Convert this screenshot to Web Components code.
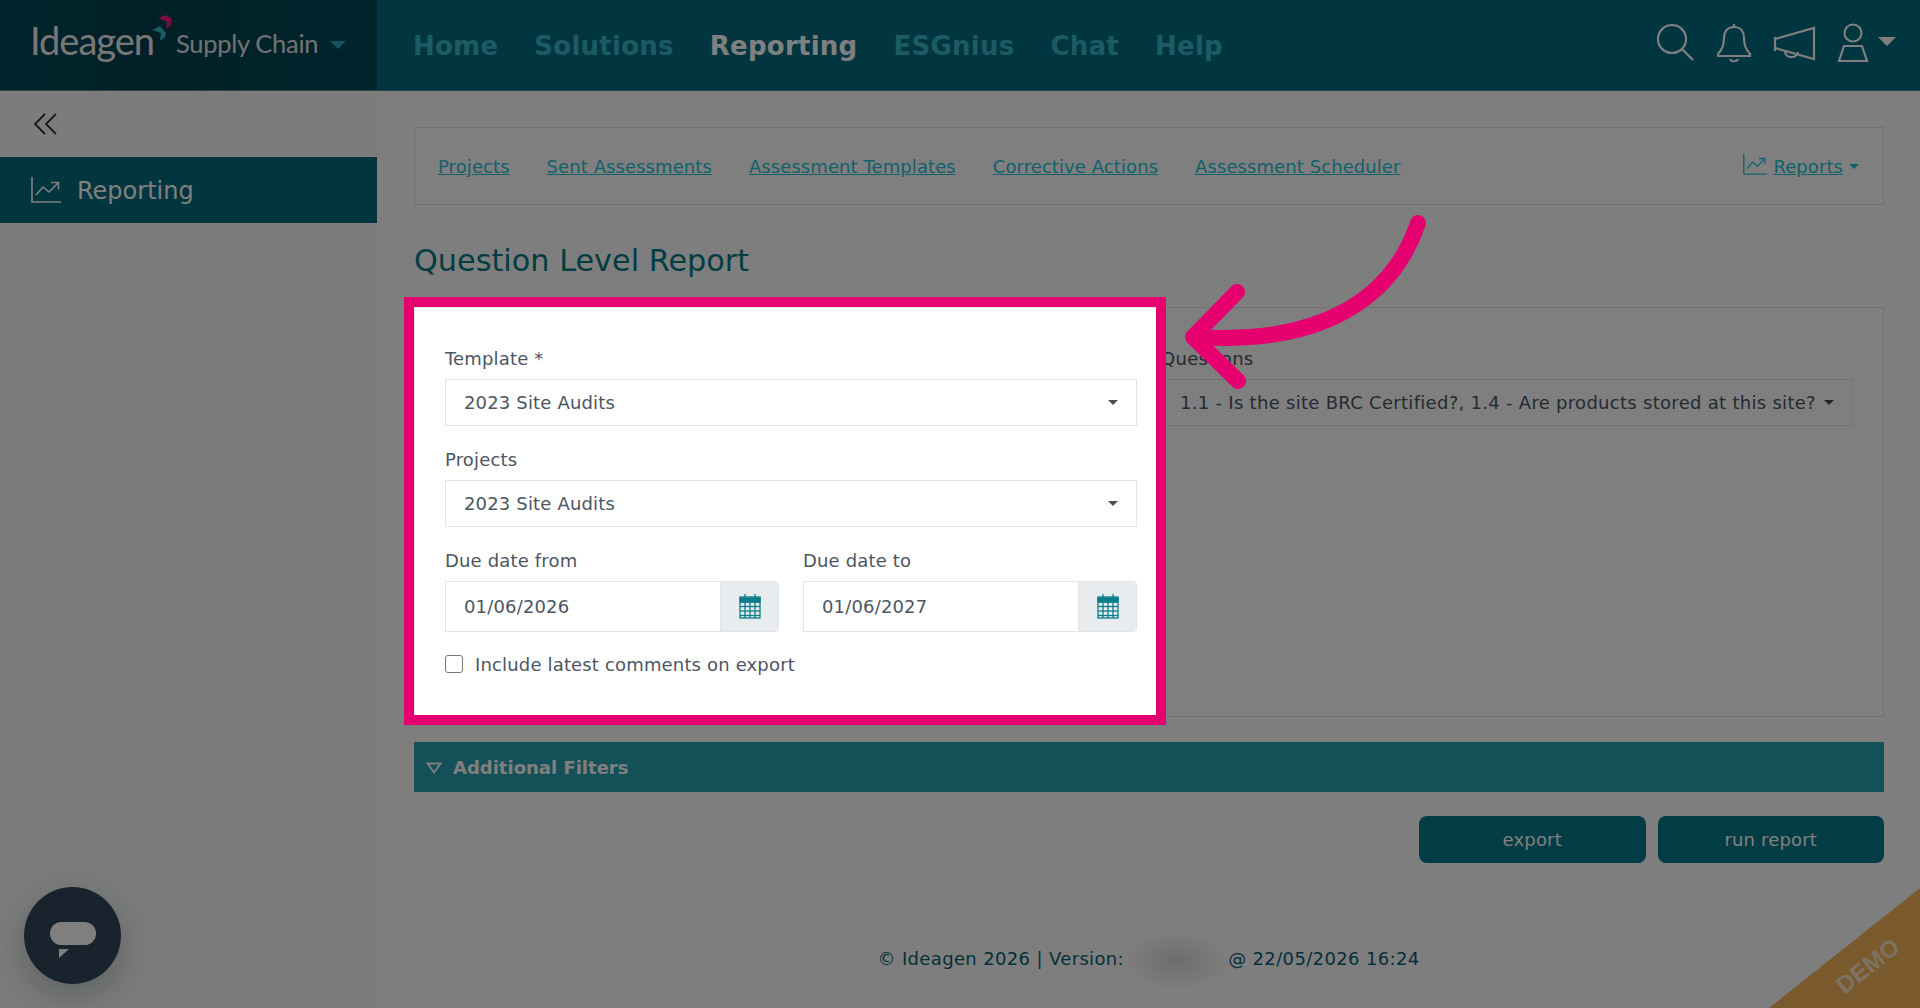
<!DOCTYPE html>
<html>
<head>
<meta charset="utf-8">
<title>Question Level Report</title>
<style>
  html, body { margin: 0; height: 100%; }
  body { font-family: "DejaVu Sans", sans-serif; font-size: 18px; letter-spacing: .16px; background: #fdfdfd; overflow: hidden; }
</style>
</head>
<body>

<sc-header></sc-header>
<div style="display:flex;height:917px">
  <sc-sidebar></sc-sidebar>
  <sc-main>
    <sc-subnav></sc-subnav>
    <sc-report></sc-report>
  </sc-main>
</div>
<sc-chat></sc-chat>
<sc-ribbon></sc-ribbon>
<sc-spotlight></sc-spotlight>

<script>
const chartIcon = `<svg viewBox="0 0 30 26" fill="none" stroke="currentColor" stroke-width="1.6"><path d="M1 0v25h29"/><path d="M5 18l7-8 6 5 9-9M20 5.500h7.500v7"/></svg>`;

class ScHeader extends HTMLElement {
  constructor() {
    super();
    this.attachShadow({mode: 'open'}).innerHTML = `
    <style>
      :host { display: flex; height: 91px; background: #036b7e; box-sizing: border-box; border-bottom: 1px solid #5a8b93; }
      .brand { width: 377px; flex: none; display: flex; align-items: flex-start; background: linear-gradient(90deg, #014b5a, #013f4d 40%, #014b5a); color: #fff; position: relative; }
      .ideagen { position: absolute; left: 30px; top: 17px; font: 400 38px "Lato", sans-serif; letter-spacing: -1px; color: #eee; }
      .mark { position: absolute; left: 150px; top: 14px; width: 22px; height: 28px; }
      .product { position: absolute; left: 176px; top: 28px; font: 400 25.500px "Lato", sans-serif; letter-spacing: -.3px; color: #e4e4e4; }
      .caret { position: absolute; left: 330px; top: 41px; width: 0; height: 0; border: 8px solid transparent; border-top: 8px solid #2aa9bd; border-bottom: 0; }
      nav { display: flex; gap: 36px; padding: 28px 0 0 36px; font-weight: bold; font-size: 26px; line-height: 36px; letter-spacing: .25px; color: #36b8c8; flex: 1; }
      nav .on { color: #fff; }
      .icons { display: flex; align-items: flex-start; color: #fff; padding: 0 24px 0 0; position: relative; width: 256px; }
      .icons svg { position: absolute; fill: none; stroke: currentColor; stroke-width: 2.200; }
      .ucaret { position: absolute; left: 238px; top: 37px; width: 0; height: 0; border: 9px solid transparent; border-top: 9px solid #fff; border-bottom: 0; }
    </style>
    <div class="brand">
      <span class="ideagen">Ideagen</span>
      <svg class="mark" viewBox="0 0 22 28"><path d="M8 4l8-3 6 4-1 6-5 4 1-7z" fill="#f0207f"/><path d="M2 16l8-4 6 7-1 4-5 4 1-8z" fill="#36b8c8"/></svg>
      <span class="product">Supply Chain</span>
      <span class="caret"></span>
    </div>
    <nav><span>Home</span><span>Solutions</span><span class="on">Reporting</span><span>ESGnius</span><span>Chat</span><span>Help</span></nav>
    <div class="icons">
      <svg style="left:16px;top:22px" width="42" height="40" viewBox="0 0 42 40"><circle cx="16" cy="17" r="14"/><path d="M26 27l11 11"/></svg>
      <svg style="left:76px;top:22px" width="36" height="42" viewBox="0 0 36 42"><path d="M18 2v3M18 5c-7 0-10 5-10 11 0 8-2 12-6 16v2h32v-2c-4-4-6-8-6-16 0-6-3-11-10-11zM14 37c1 3 7 3 8 0"/></svg>
      <svg style="left:133px;top:25px" width="44" height="38" viewBox="0 0 44 38"><path d="M2 12v14M2 14L41 3v31L2 23M12 26c0 8 12 8 13 1"/></svg>
      <svg style="left:196px;top:23px" width="34" height="40" viewBox="0 0 34 40"><circle cx="17" cy="10" r="8.500"/><path d="M8 23h18l5 15H3z"/></svg>
      <span class="ucaret"></span>
    </div>`;
  }
}

class ScSidebar extends HTMLElement {
  constructor() {
    super();
    this.attachShadow({mode: 'open'}).innerHTML = `
    <style>
      :host { display: block; width: 377px; flex: none; background: #f9f9f9; }
      .toggle { height: 66px; padding-left: 33px; display: flex; align-items: center; color: #333; }
      .item { height: 66px; background: #026c7e; color: #fff; display: flex; align-items: center; gap: 16px; padding-left: 31px; font-size: 24px; letter-spacing: 0; }
      .item span { padding-top: 2px; }
      svg { display: block; }
    </style>
    <div class="toggle"><svg width="25" height="22" viewBox="0 0 25 22" fill="none" stroke="currentColor" stroke-width="1.800"><path d="M12 1L2 11l10 10M23 1L13 11l10 10"/></svg></div>
    <div class="item"><svg width="30" height="26">${chartIcon.replace(/^<svg/, '<svg width="30" height="26"')}</svg><span>Reporting</span></div>`;
  }
}

class ScMain extends HTMLElement {
  constructor() {
    super();
    this.attachShadow({mode: 'open'}).innerHTML = `
    <style>
      :host { display: block; flex: 1; padding: 36px 36px 0 37px; position: relative; }
      .foot { position: absolute; left: 0; right: 0; top: 857px; text-align: center; color: #075f70; font-size: 18px; letter-spacing: .35px; }
      .blur { position: absolute; left: 745px; top: 840px; width: 110px; height: 60px; background: radial-gradient(closest-side, #d8dcdc, transparent); }
    </style>
    <slot></slot>
    <div class="blur"></div>
    <div class="foot">© Ideagen 2026 | Version: <span style="display:inline-block;width:92px"></span> @ 22/05/2026 16:24</div>`;
  }
}

class ScSubnav extends HTMLElement {
  constructor() {
    super();
    this.attachShadow({mode: 'open'}).innerHTML = `
    <style>
      :host { display: flex; align-items: center; height: 78px; box-sizing: border-box; border: 1px solid #e4e4e4; padding: 0 24px 0 23px; gap: 37px; background: #fff; color: #22c4d8; letter-spacing: .08px; }
      a { color: inherit; text-decoration: underline; }
      .r { margin-left: auto; display: flex; align-items: center; gap: 6px; }
      .c { width: 0; height: 0; border: 5px solid transparent; border-top: 5px solid currentColor; border-bottom: 0; }
      svg { width: 24px; height: 21px; margin-bottom: 4px; }
    </style>
    <a>Projects</a><a>Sent Assessments</a><a>Assessment Templates</a><a>Corrective Actions</a><a>Assessment Scheduler</a>
    <span class="r">${chartIcon}<a>Reports</a><span class="c"></span></span>`;
  }
}

class ScSelect extends HTMLElement {
  constructor() {
    super();
    this.attachShadow({mode: 'open'}).innerHTML = `
    <style>
      :host { display: block; color: #4d5563; }
      label { display: block; height: 33px; line-height: 26px; }
      .box { height: 47px; box-sizing: border-box; border: 1px solid #e2e4e8; background: #fff; display: flex; align-items: center; padding: 0 18px; }
      .v { flex: 1; }
      .c { width: 0; height: 0; border: 5px solid transparent; border-top: 5px solid #495057; border-bottom: 0; }
    </style>
    <label>${this.getAttribute('label')}</label>
    <div class="box"><span class="v"><slot></slot></span><span class="c"></span></div>`;
  }
}

class ScDate extends HTMLElement {
  constructor() {
    super();
    let cal = '';
    for (let i = 0; i < 4; i++) cal += `<path d="M1 ${8 + i * 4.500}h20"/>`;
    for (let i = 1; i < 4; i++) cal += `<path d="M${1 + i * 5} 8v16"/>`;
    this.attachShadow({mode: 'open'}).innerHTML = `
    <style>
      :host { display: block; color: #4d5563; flex: 1; }
      label { display: block; height: 33px; line-height: 26px; }
      .box { height: 51px; box-sizing: border-box; border: 1px solid #e2e4e8; border-radius: 0 4px 4px 0; display: flex; background: #fff; }
      .v { flex: 1; display: flex; align-items: center; padding-left: 18px; }
      .a { width: 57px; background: #e9ecef; display: flex; align-items: center; justify-content: center; border-left: 1px solid #e2e4e8; border-radius: 0 4px 4px 0; }
    </style>
    <label>${this.getAttribute('label')}</label>
    <div class="box"><span class="v"><slot></slot></span><span class="a">
      <svg width="22" height="25" viewBox="0 0 22 25" fill="none" stroke="#0c7d8a" stroke-width="1.300"><rect x="1" y="3" width="20" height="21"/><path d="M1 4h20V8H1z" fill="#0c7d8a"/><path d="M6 0v4M16 0v4"/>${cal}</svg>
    </span></div>`;
  }
}

class ScReport extends HTMLElement {
  constructor() {
    super();
    this.attachShadow({mode: 'open'}).innerHTML = `
    <style>
      :host { display: block; }
      h1 { font-weight: normal; font-size: 30.300px; letter-spacing: 0; color: #057a88; margin: 0; height: 102px; padding-top: 36px; box-sizing: border-box; line-height: 40px; }
      .card { background: #fff; border: 1px solid #e4e4e4; height: 410px; box-sizing: border-box; padding: 38px 30px 0; display: grid; grid-template-columns: 692px 692px; gap: 24px; align-items: start; }
      .left { display: flex; flex-direction: column; gap: 0; }
      .left sc-select { margin-bottom: 21px; }
      .row { display: flex; gap: 24px; margin-bottom: 21px; }
      .check { display: flex; align-items: center; gap: 12px; color: #4d5563; height: 22px; }
      .check i { width: 16px; height: 16px; border: 1.500px solid #767676; border-radius: 3px; display: block; background: #fff; }
      .filters { margin-top: 25px; height: 50px; box-sizing: border-box; padding-top: 1px; background: #28a0b0; color: #fff; display: flex; align-items: center; padding-left: 12px; gap: 11px; font-weight: bold; letter-spacing: 0; }
      .btns { display: flex; justify-content: flex-end; gap: 12px; margin-top: 24px; }
      button { all: unset; width: 226.500px; height: 47px; border-radius: 8px; background: #057888; color: #fff; font: 18px "DejaVu Sans", sans-serif; text-align: center; }
      .qs { letter-spacing: .29px; }
    </style>
    <h1>Question Level Report</h1>
    <div class="card">
      <div class="left">
        <sc-select label="Template *">2023 Site Audits</sc-select>
        <sc-select label="Projects">2023 Site Audits</sc-select>
        <div class="row">
          <sc-date label="Due date from">01/06/2026</sc-date>
          <sc-date label="Due date to">01/06/2027</sc-date>
        </div>
        <div class="check"><i></i><span>Include latest comments on export</span></div>
      </div>
      <sc-select class="qs" label="Questions">1.1 - Is the site BRC Certified?, 1.4 - Are products stored at this site?</sc-select>
    </div>
    <div class="filters">
      <svg width="16" height="12" viewBox="0 0 16 12" fill="none" stroke="#fff" stroke-width="1.800"><path d="M1.500 1.500h13L8 10.500z"/></svg>
      <span>Additional Filters</span>
    </div>
    <div class="btns"><button>export</button><button>run report</button></div>`;
  }
}

class ScChat extends HTMLElement {
  constructor() {
    super();
    this.attachShadow({mode: 'open'}).innerHTML = `
    <style>
      :host { position: fixed; left: 24px; top: 887px; width: 97px; height: 97px; border-radius: 50%; background: #33465a; box-shadow: 0 12px 40px rgba(60,90,90,.35); }
      svg { display: block; }
    </style>
    <svg width="97" height="97" viewBox="0 0 97 97"><rect x="26" y="35" width="46" height="23" rx="11.500" fill="#fff"/><path d="M35 62h10l-10 9z" fill="#fff"/></svg>`;
  }
}

class ScRibbon extends HTMLElement {
  constructor() {
    super();
    this.attachShadow({mode: 'open'}).innerHTML = `
    <style>
      :host { position: fixed; right: 0; bottom: 0; width: 151px; height: 120px; background: #f4b55a; clip-path: polygon(100% 0, 100% 100%, 0 100%); }
      span { position: absolute; left: 54px; top: 64px; width: 90px; text-align: center; font: bold 24px "Liberation Sans", sans-serif; color: #fff; opacity: .65; transform: rotate(-38deg); line-height: 28px; }
    </style>
    <span>DEMO</span>`;
  }
}

class ScSpotlight extends HTMLElement {
  constructor() {
    super();
    this.attachShadow({mode: 'open'}).innerHTML = `
    <style>
      :host { position: fixed; inset: 0; overflow: hidden; pointer-events: none; }
      .hole { position: absolute; left: 404px; top: 297px; width: 762px; height: 428px; box-sizing: border-box; border: 10px solid #e6006f; box-shadow: 0 0 0 3000px rgba(0,0,0,.5); }
      svg { position: absolute; left: 0; top: 0; }
    </style>
    <div class="hole"></div>
    <svg width="1920" height="1008" fill="none" stroke="#e6006f" stroke-width="16" stroke-linecap="round" stroke-linejoin="round">
      <path d="M1418 223C1392 300 1320 345 1197 337"/><path d="M1237 292L1193 337L1238 381"/>
    </svg>`;
  }
}

customElements.define('sc-header', ScHeader);
customElements.define('sc-sidebar', ScSidebar);
customElements.define('sc-main', ScMain);
customElements.define('sc-subnav', ScSubnav);
customElements.define('sc-select', ScSelect);
customElements.define('sc-date', ScDate);
customElements.define('sc-report', ScReport);
customElements.define('sc-chat', ScChat);
customElements.define('sc-ribbon', ScRibbon);
customElements.define('sc-spotlight', ScSpotlight);
</script>
</body>
</html>
